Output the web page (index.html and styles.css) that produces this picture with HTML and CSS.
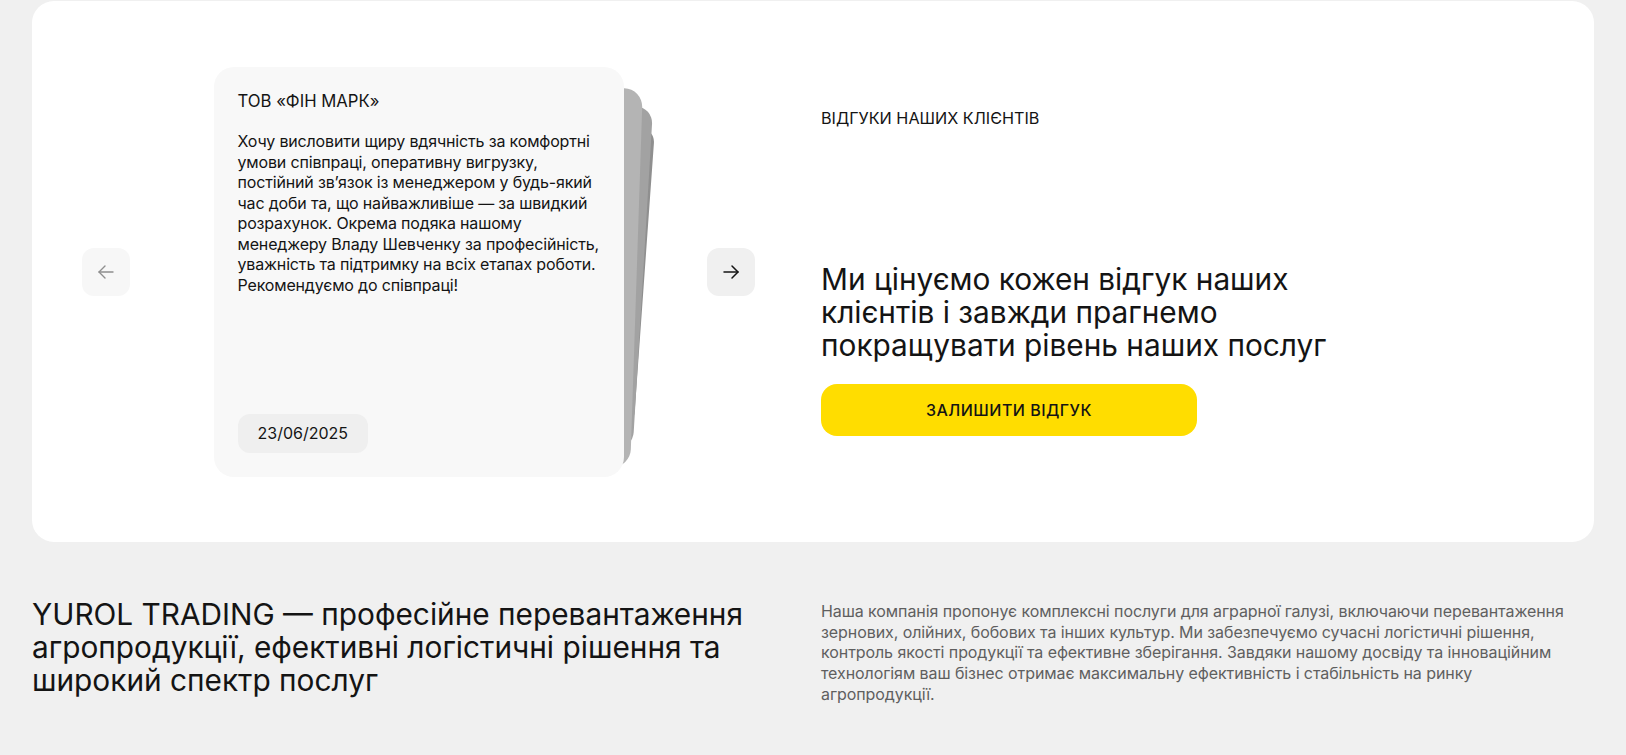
FILE: index.html
```html
<!DOCTYPE html>
<html lang="uk">
<head>
<meta charset="utf-8">
<title>Відгуки — YUROL TRADING</title>
<link rel="stylesheet" href="styles.css">
</head>
<body>
<div class="page">
  <section class="reviews">
    <div class="slider">
      <button class="nav nav-prev" aria-label="Попередній">
        <svg width="20" height="20" viewBox="0 0 20 20" fill="none" stroke="currentColor" stroke-width="1.4" stroke-linecap="round" stroke-linejoin="round"><path d="M17 10H3"/><path d="M9 4l-6 6 6 6"/></svg>
      </button>
      <div class="stack">
        <div class="sheet sheet-3"></div>
        <div class="sheet sheet-2"></div>
        <div class="sheet sheet-1"></div>
        <article class="review">
          <h3 class="review-company">ТОВ «ФІН МАРК»</h3>
          <p class="review-text">Хочу висловити щиру вдячність за комфортні умови співпраці, оперативну вигрузку, постійний зв’язок із менеджером у будь-який час доби та, що найважливіше — за швидкий розрахунок. Окрема подяка нашому менеджеру Владу Шевченку за професійність, уважність та підтримку на всіх етапах роботи. Рекомендуємо до співпраці!</p>
          <span class="review-date">23/06/2025</span>
        </article>
      </div>
      <button class="nav nav-next" aria-label="Наступний">
        <svg width="20" height="20" viewBox="0 0 20 20" fill="none" stroke="currentColor" stroke-width="1.5" stroke-linecap="round" stroke-linejoin="round"><path d="M3 10h14"/><path d="M11 4l6 6-6 6"/></svg>
      </button>
    </div>
    <div class="reviews-info">
      <p class="eyebrow">Відгуки наших клієнтів</p>
      <h2 class="reviews-title">Ми цінуємо кожен відгук наших клієнтів і завжди прагнемо покращувати рівень наших послуг</h2>
      <button class="cta">Залишити відгук</button>
    </div>
  </section>

  <section class="about">
    <h2 class="about-title">YUROL TRADING — професійне перевантаження агропродукції, ефективні логістичні рішення та широкий спектр послуг</h2>
    <p class="about-text">Наша компанія пропонує комплексні послуги для аграрної галузі, включаючи перевантаження зернових, олійних, бобових та інших культур. Ми забезпечуємо сучасні логістичні рішення, контроль якості продукції та ефективне зберігання. Завдяки нашому досвіду та інноваційним технологіям ваш бізнес отримає максимальну ефективність і стабільність на ринку агропродукції.</p>
  </section>
</div>
</body>
</html>
```

FILE: styles.css
```css
* { box-sizing: border-box; }

body {
  margin: 0;
  background: #f0f0f0;
  font-family: Inter, "Noto Sans", "Liberation Sans", sans-serif;
  color: #141414;
}

.page {
  padding: 1px 32px 40px;
}

/* ---------- reviews card ---------- */
.reviews {
  display: grid;
  grid-template-columns: 1fr 1fr;
  column-gap: 16px;
  background: #ffffff;
  border-radius: 22px;
}

.slider {
  display: flex;
  align-items: center;
  justify-content: space-between;
  padding: 66px 50px 65px;
}

.nav {
  width: 48px;
  height: 48px;
  padding: 0;
  border: 0;
  border-radius: 12px;
  display: flex;
  align-items: center;
  justify-content: center;
  cursor: pointer;
}

.nav-prev {
  background: #f7f7f7;
  color: #8f8f8f;
}

.nav-next {
  background: #f0f0f0;
  color: #141414;
}

.stack {
  position: relative;
  width: 410px;
  height: 410px;
}

.sheet {
  position: absolute;
  inset: 0;
  border-radius: 20px;
}

.sheet-1 {
  background: #b4b4b4;
  transform: translate(28px, 0) rotate(1.9deg) scale(0.925);
}

.sheet-2 {
  background: #a2a2a2;
  transform: translate(53px, -4px) rotate(3.4deg) scale(0.835);
}

.sheet-3 {
  background: #8f8f8f;
  transform: translate(76px, -5px) rotate(4.1deg) scale(0.73);
}

.review {
  position: relative;
  height: 100%;
  padding: 24px 18px 24px 24px;
  background: #f8f8f8;
  border-radius: 20px;
  display: flex;
  flex-direction: column;
}

.review-company {
  margin: 0;
  font-size: 16.7px;
  line-height: 21px;
  font-weight: 400;
}

.review-text {
  margin: 19px 0 0;
  font-size: 16px;
  line-height: 20.5px;
  letter-spacing: -0.01em;
}

.review-date {
  margin-top: auto;
  align-self: flex-start;
  padding: 9px 20px;
  background: #efefef;
  border-radius: 12px;
  font-size: 16px;
  line-height: 21px;
}

.reviews-info {
  padding-top: 107px;
  display: flex;
  flex-direction: column;
  align-items: flex-start;
}

.eyebrow {
  margin: 0;
  font-size: 16.2px;
  line-height: 20px;
  text-transform: uppercase;
}

.reviews-title {
  margin: 135px 0 0;
  max-width: 560px;
  font-size: 29.8px;
  line-height: 33px;
  font-weight: 400;
}

.cta {
  margin-top: 22px;
  width: 376px;
  height: 52px;
  border: 0;
  border-radius: 16px;
  background: #ffdd00;
  color: #141414;
  font-family: inherit;
  font-size: 16px;
  line-height: 20px;
  font-weight: 500;
  letter-spacing: 0.03em;
  text-transform: uppercase;
  cursor: pointer;
}

/* ---------- about ---------- */
.about {
  display: grid;
  grid-template-columns: 1fr 1fr;
  column-gap: 16px;
  margin-top: 56px;
  align-items: start;
}

.about-title {
  margin: 0;
  font-size: 29.8px;
  line-height: 33px;
  font-weight: 400;
}

.about-text {
  margin: 3px 0 0;
  max-width: 752px;
  font-size: 16px;
  line-height: 20.7px;
  letter-spacing: -0.005em;
  color: #5f5f5f;
}
```
